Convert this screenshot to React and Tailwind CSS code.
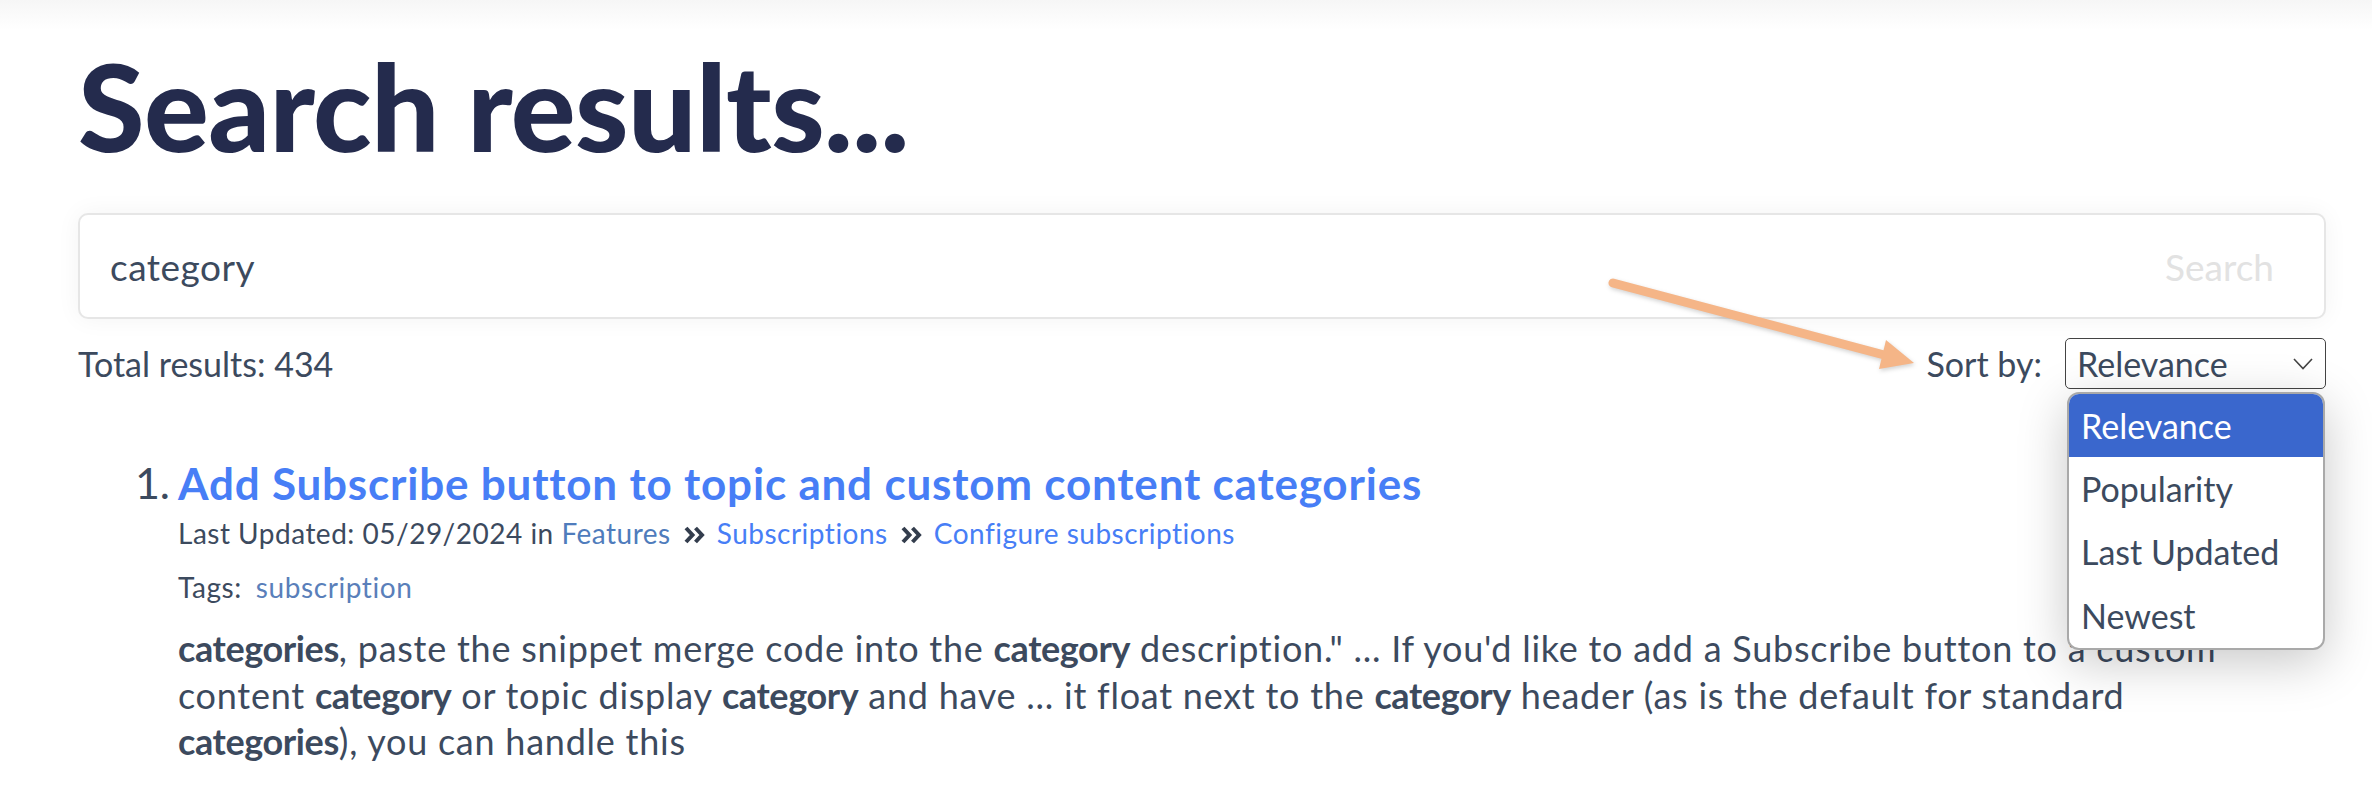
import React from "react";

function DoubleChevron() {
  return (
    <svg width="22" height="18" viewBox="0 0 22 18" className="inline-block mx-[12px] align-baseline" aria-hidden="true">
      <path d="M3 2 L9.5 9 L3 16" fill="none" stroke="#333d4d" strokeWidth="4" strokeLinejoin="miter" />
      <path d="M12.5 2 L19 9 L12.5 16" fill="none" stroke="#333d4d" strokeWidth="4" strokeLinejoin="miter" />
    </svg>
  );
}

function Arrow() {
  return (
    <svg
      className="absolute left-0 top-0 pointer-events-none"
      width="2372"
      height="785"
      viewBox="0 0 2372 785"
      aria-hidden="true"
      style={{ filter: "drop-shadow(1px 2px 2px rgba(0,0,0,0.18))" }}
    >
      <line x1="1613" y1="283" x2="1888" y2="356" stroke="#f5b587" strokeWidth="9" strokeLinecap="round" />
      <polygon points="1914,363 1886,340 1879,369" fill="#f5b587" />
    </svg>
  );
}

function B({ children }) {
  return <b className="font-bold tracking-[-0.4px]">{children}</b>;
}

export default function App() {
  const items = ["Relevance", "Popularity", "Last Updated", "Newest"];
  return (
    <div className="relative min-h-[785px] overflow-hidden bg-[linear-gradient(to_bottom,#f6f6f6_0px,#ffffff_30px)] font-['Lato',sans-serif] text-[#3c4a5e]">
      <div className="pl-[78px] pr-[46px]">
        <h1 className="pt-[45px] text-[121px] font-black leading-none tracking-[-0.6px] text-[#242b4d]">
          Search results...
        </h1>

        <div className="mt-[47px] flex h-[106px] items-center rounded-[10px] border-2 border-[#e6e6e6] bg-white pl-[30px] pr-[50px] shadow-[0_0_24px_rgba(0,0,0,0.05)]">
          <span className="flex-1 text-[37px] leading-none tracking-[0.5px] text-[#3c4a5e]">category</span>
          <span className="text-[37px] leading-none text-[#e2e2e2]">Search</span>
        </div>

        <div className="mt-[19px] flex h-[51px] items-center justify-between">
          <span className="text-[34px] leading-none">Total results: 434</span>
          <div className="flex items-center gap-[23px]">
            <span className="text-[34px] leading-none">Sort by:</span>
            <div className="relative">
              <div className="flex h-[51px] w-[261px] items-center justify-between rounded-[5px] border-[1.5px] border-[#444] bg-white pl-[11px] pr-[12px]">
                <span className="text-[34px] leading-none text-[#3c4a5e]">Relevance</span>
                <svg width="20" height="12" viewBox="0 0 20 12" aria-hidden="true">
                  <polyline points="1,1 10,10.5 19,1" fill="none" stroke="#444" strokeWidth="1.6" />
                </svg>
              </div>
              <div className="absolute left-[2px] top-[54px] z-10 w-[258px] overflow-hidden rounded-[12px] border-2 border-[#a9a9a9] bg-white shadow-[0_12px_50px_rgba(0,0,0,0.22)]">
                {items.map((it, i) => (
                  <div
                    key={it}
                    className={
                      i === 0
                        ? "flex h-[63px] items-center bg-[#3a67cd] pl-[12px] text-[34px] leading-none text-white"
                        : "flex h-[63.5px] items-center pl-[12px] text-[34px] leading-none text-[#3c4a5e]"
                    }
                  >
                    {it}
                  </div>
                ))}
              </div>
            </div>
          </div>
        </div>

        <div className="mt-[72px] flex">
          <span className="w-[100px] shrink-0 pr-[8px] text-right text-[43px] leading-none text-[#3c4a5e]">1.</span>
          <div className="flex-1">
            <div className="text-[44px] font-bold leading-none tracking-[0.8px] text-[#477ef6]">
              Add Subscribe button to topic and custom content categories
            </div>
            <div className="mt-[14px] text-[28px] leading-none tracking-[0.5px]">
              Last Updated: 05/29/2024 in <span className="text-[#4f7cbc]">Features</span>
              <DoubleChevron />
              <span className="text-[#477ef6]">Subscriptions</span>
              <DoubleChevron />
              <span className="text-[#477ef6]">Configure subscriptions</span>
            </div>
            <div className="mt-[26px] text-[28px] leading-none tracking-[0.6px]">
              Tags: <span className="ml-[6px] text-[#5a7fba]">subscription</span>
            </div>
            <p className="mt-[24px] whitespace-nowrap text-[36px] leading-[46.5px] tracking-[0.75px]">
              <B>categories</B>, paste the snippet merge code into the <B>category</B> description." ... If you'd like to add a Subscribe button to a custom
              <br />
              content <B>category</B> or topic display <B>category</B> and have ... it float next to the <B>category</B> header (as is the default for standard
              <br />
              <B>categories</B>), you can handle this
            </p>
          </div>
        </div>
      </div>
      <Arrow />
    </div>
  );
}
